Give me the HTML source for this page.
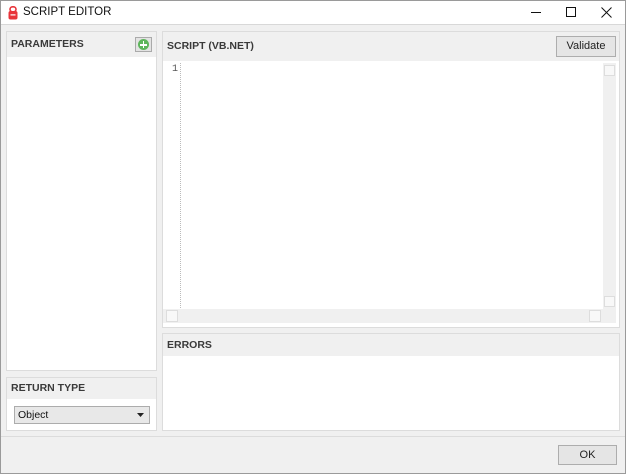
<!DOCTYPE html>
<html><head><meta charset="utf-8"><style>
*{margin:0;padding:0;box-sizing:border-box}
body{width:626px;height:474px;background:#f0f0f0;font-family:"Liberation Sans",sans-serif;position:relative;overflow:hidden}
.abs{position:absolute}
.title{left:0;top:0;width:626px;height:25px;background:#fff;border-bottom:1px solid #d8d8d8}
.panel{position:absolute;background:#fff;border:1px solid #dcdcdc}
.hdr{position:absolute;left:0;right:0;top:0;background:#f0f0f0;font-size:10.5px;font-weight:bold;color:#3a3a3a;padding-left:4px}
.btn{position:absolute;background:#e5e5e5;border:1px solid #adadad;font-size:11px;color:#222;text-align:center}
</style></head><body>
<div class="abs title">
 <svg class="abs" style="left:8px;top:6px" width="10" height="14" viewBox="0 0 10 14"><rect x="2" y="0.8" width="6" height="5" rx="2.5" fill="none" stroke="#e8343a" stroke-width="1.6"/><rect x="0.5" y="5" width="9" height="8.5" rx="2" fill="#e8343a"/><rect x="2.5" y="8.3" width="5" height="1.2" fill="#fff"/></svg>
 <div class="abs" style="left:23px;top:6px;font-size:11.5px;color:#111">SCRIPT EDITOR</div>
 <div class="abs" style="left:531px;top:12px;width:10px;height:1px;background:#111"></div>
 <div class="abs" style="left:566px;top:7px;width:10px;height:10px;border:1px solid #111"></div>
 <svg class="abs" style="left:601px;top:7px" width="11" height="11"><path d="M0.5 0.5L10.5 10.5M10.5 0.5L0.5 10.5" stroke="#111" stroke-width="1"/></svg>
</div>
<div class="panel" style="left:6px;top:31px;width:151px;height:340px">
 <div class="hdr" style="height:25px;line-height:25px">PARAMETERS</div>
 <div class="abs" style="left:128px;top:5px;width:17px;height:15px;background:#e3e3e3;border:1px solid #aaa"></div>
 <div class="abs" style="left:131px;top:7px;width:11px;height:11px;border-radius:50%;background:#5db55b"></div>
 <div class="abs" style="left:133px;top:12px;width:7px;height:1.5px;background:#fff"></div>
 <div class="abs" style="left:135.7px;top:9px;width:1.5px;height:7px;background:#fff"></div>
</div>
<div class="panel" style="left:6px;top:377px;width:151px;height:54px">
 <div class="hdr" style="height:21px;line-height:21px">RETURN TYPE</div>
 <div class="abs" style="left:7px;top:28px;width:136px;height:18px;background:#e8e8e8;border:1px solid #acacac;font-size:10.5px;line-height:16px;padding-left:3px;color:#111">Object
  <svg class="abs" style="right:5px;top:6px" width="7" height="4"><path d="M0 0H7L3.5 4Z" fill="#222"/></svg></div>
</div>
<div class="panel" style="left:162px;top:31px;width:458px;height:297px">
 <div class="hdr" style="height:29px;line-height:29px">SCRIPT (VB.NET)</div>
 <div class="btn" style="left:393px;top:4px;width:60px;height:21px;line-height:19px">Validate</div>
 <div class="abs" style="left:17px;top:31px;width:0;height:245px;border-left:1px dotted #bbb"></div>
 <div class="abs" style="left:9px;top:32px;font-family:'Liberation Mono',monospace;font-size:10px;color:#555">1</div>
 <div class="abs" style="left:440px;top:31px;width:13px;height:246px;background:#f0f0f0"></div>
 <div class="abs" style="left:441px;top:33px;width:11px;height:11px;border:1px solid #ddd;background:#f8f8f8"></div>
 <div class="abs" style="left:441px;top:264px;width:11px;height:11px;border:1px solid #ddd;background:#f8f8f8"></div>
 <div class="abs" style="left:0;top:277px;width:453px;height:14px;background:#f0f0f0"></div>
 <div class="abs" style="left:3px;top:278px;width:12px;height:12px;border:1px solid #ddd;background:#f8f8f8"></div>
 <div class="abs" style="left:426px;top:278px;width:12px;height:12px;border:1px solid #ddd;background:#f8f8f8"></div>
</div>
<div class="panel" style="left:162px;top:333px;width:458px;height:98px">
 <div class="hdr" style="height:22px;line-height:22px">ERRORS</div>
</div>
<div class="abs" style="left:0;top:436px;width:626px;height:1px;background:#dcdcdc"></div>
<div class="btn" style="left:558px;top:445px;width:59px;height:20px;line-height:18px">OK</div>
<div class="abs" style="left:0;top:0;width:626px;height:474px;border:1px solid #9a9a9a;pointer-events:none"></div>
</body></html>
